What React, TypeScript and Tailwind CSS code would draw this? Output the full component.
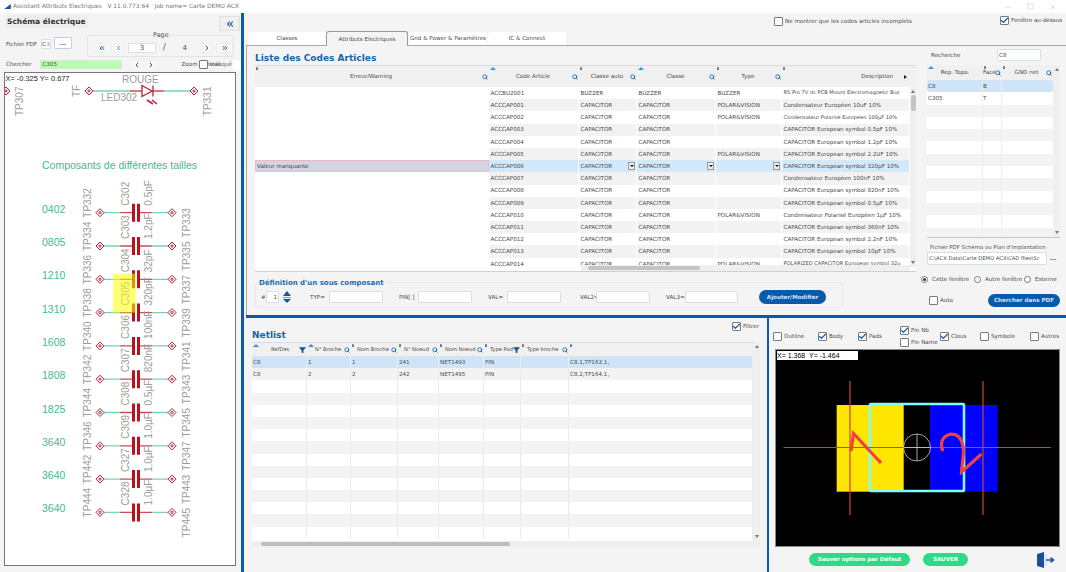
import React from "react";
import { Check, ChevronLeft, ChevronRight, ChevronsLeft, ChevronsRight, Filter, Minus, Search, Square, X } from "lucide-react";

const BLUE = "#0b5aa8";

type Row = [string, string, string, string, string];

const codes: Row[] = [
  ["ACCBU2001", "BUZZER", "BUZZER", "BUZZER", "RS Pro 7V dc PCB Mount Electromagnetic Buz"],
  ["ACCCAP001", "CAPACITOR", "CAPACITOR", "POLAR&VISION", "Condensateur  Européen  10uF 10%"],
  ["ACCCAP002", "CAPACITOR", "CAPACITOR", "POLAR&VISION", "Condensateur Polarisé  Européen  100µF 10%"],
  ["ACCCAP003", "CAPACITOR", "CAPACITOR", "", "CAPACITOR  European symbol  0.5pF 10%"],
  ["ACCCAP004", "CAPACITOR", "CAPACITOR", "", "CAPACITOR  European symbol  1.2pF 10%"],
  ["ACCCAP005", "CAPACITOR", "CAPACITOR", "POLAR&VISION", "CAPACITOR  European symbol  2.2UF 10%"],
  ["ACCCAP006", "CAPACITOR", "CAPACITOR", "", "CAPACITOR  European symbol  320pF 10%"],
  ["ACCCAP007", "CAPACITOR", "CAPACITOR", "", "Condensateur  Européen  100nF 10%"],
  ["ACCCAP008", "CAPACITOR", "CAPACITOR", "", "CAPACITOR European symbol 820nF 10%"],
  ["ACCCAP009", "CAPACITOR", "CAPACITOR", "", "CAPACITOR  European symbol  0.5µF 10%"],
  ["ACCCAP010", "CAPACITOR", "CAPACITOR", "POLAR&VISION", "Condensateur Polarisé Européen 1µF 10%"],
  ["ACCCAP011", "CAPACITOR", "CAPACITOR", "", "CAPACITOR  European symbol  360nF 10%"],
  ["ACCCAP012", "CAPACITOR", "CAPACITOR", "", "CAPACITOR  European symbol  2.2nF 10%"],
  ["ACCCAP013", "CAPACITOR", "CAPACITOR", "", "CAPACITOR  European symbol  10pF 10%"],
  ["ACCCAP014", "CAPACITOR", "CAPACITOR", "POLAR&VISION", "POLARIZED CAPACITOR  European symbol  32u"],
];

const caps = [
  ["0402", "TP332", "C302", "0.5pF", "TP333"],
  ["0805", "TP334", "C303", "1.2pF", "TP335"],
  ["1210", "TP336", "C304", "32pF", "TP337"],
  ["1310", "TP338", "C305", "320pF", "TP339"],
  ["1608", "TP340", "C306", "100nF", "TP341"],
  ["1808", "TP342", "C307", "820nF", "TP343"],
  ["1825", "TP344", "C308", "0.5µF", "TP345"],
  ["3640", "TP346", "C309", "1.0µF", "TP347"],
  ["3640", "TP442", "C327", "1.0µF", "TP443"],
  ["3640", "TP444", "C328", "1.0µF", "TP445"],
];

function Box({ checked = false }: { checked?: boolean }) {
  return (
    <span className="w-[9px] h-[9px] shrink-0 bg-white border border-[#7a7a7a] rounded-[1px] flex items-center justify-center">
      {checked && <Check size={9} strokeWidth={3.5} color="#1b5fa8" className="shrink-0" />}
    </span>
  );
}

function Tick({ label, checked, className = "" }: { label: string; checked?: boolean; className?: string }) {
  return (
    <span className={"flex items-center gap-[2px] " + className}>
      <Box checked={checked} />
      <span className="whitespace-nowrap">{label}</span>
    </span>
  );
}

function Radio({ label, on, className = "" }: { label: string; on?: boolean; className?: string }) {
  return (
    <span className={"flex items-center gap-[4px] " + className}>
      <span className="w-[7px] h-[7px] rounded-full bg-white border border-[#777] flex items-center justify-center">
        {on && <span className="w-[3px] h-[3px] rounded-full bg-[#333]" />}
      </span>
      <span className="whitespace-nowrap">{label}</span>
    </span>
  );
}

function Lens({ className = "" }: { className?: string }) {
  return <Search size={6} strokeWidth={3.5} color="#1b6ab5" className={"absolute top-1/2 -translate-y-1/2 " + className} />;
}

function Funnel({ className = "" }: { className?: string }) {
  return <Filter size={7} strokeWidth={2} color="#1b4f80" fill="#1b4f80" className={"absolute top-1/2 -translate-y-1/2 " + className} />;
}

function Sort({ className = "" }: { className?: string }) {
  return <span className={"absolute top-[1px] w-0 h-0 border-x-[3px] border-x-transparent border-b-[3px] border-b-[#2a9be0] " + className} />;
}

function Pin({ className = "" }: { className?: string }) {
  return <span className={"absolute top-[1px] w-[2px] h-[3px] bg-[#777] rounded-t-[1px] " + className} />;
}

function NavBtn({ children, className = "" }: { children: React.ReactNode; className?: string }) {
  return <span className={"h-[10px] bg-[#f7f7f7] border border-[#eeeeee] flex items-center justify-center text-[#1b6ab5] " + className}>{children}</span>;
}

function Input({ className = "", value = "" }: { className?: string; value?: string }) {
  return (
    <span className={"h-[12px] bg-white border border-[#d6e0ea] rounded-[1px] flex items-center px-[1px] whitespace-nowrap shrink-0 " + className}>
      {value}
    </span>
  );
}

function ScrollV({ className = "", thumb = "" }: { className?: string; thumb?: string }) {
  return (
    <div className={"w-[6px] bg-[#efefef] flex flex-col items-center shrink-0 " + className}>
      <span className="mt-[3px] w-0 h-0 border-x-[2px] border-x-transparent border-b-[3px] border-b-[#777]" />
      <span className={"w-[5px] bg-[#c4c4c4] rounded-[3px] " + thumb} />
      <span className="mt-auto mb-[3px] w-0 h-0 border-x-[2px] border-x-transparent border-t-[3px] border-t-[#777]" />
    </div>
  );
}

function Pad({ x, y }: { x: number; y: number }) {
  return (
    <g fill="#ffffff" stroke="#c01f2e" strokeWidth="1">
      <path d={`M${x - 4} ${y}L${x} ${y - 4}L${x + 4} ${y}L${x} ${y + 4}Z`} />
      <circle cx={x} cy={y} r="1.1" fill="#ffffff" />
    </g>
  );
}

function Schematic() {
  const grey = "#9c9c9c";
  return (
    <svg viewBox="5 73 230 492" className="w-[230px] h-[492px] block" fontFamily="'Liberation Sans', sans-serif">
      <text x="5.5" y="81" fontSize="7.4" fill="#222">X= -0.325  Y= 0.677</text>
      <text x="122" y="83" fontSize="10" fill={grey}>ROUGE</text>
      <text x="101" y="101" fontSize="10" fill={grey}>LED302</text>
      <text transform="translate(80 97) rotate(-90)" fontSize="10" fill={grey}>TF</text>
      <text transform="translate(23 116) rotate(-90)" fontSize="10" fill={grey}>TP307</text>
      <text transform="translate(211 116) rotate(-90)" fontSize="10" fill={grey}>TP331</text>
      <Pad x={6} y={91} />
      <Pad x={89} y={91} />
      <Pad x={194} y={91} />
      <path d="M93 91H130M164 91H190" stroke="#7fd0b5" strokeWidth="1.3" />
      <path d="M130 91H142M153 91H164" stroke="#c85050" strokeWidth="1.3" />
      <path d="M142 85.5V96.5L152 91ZM153 85.5V96.5" fill="none" stroke="#c01f2e" strokeWidth="1.3" />
      <path d="M147 100L153 104M152 100L157 104" stroke="#c01f2e" strokeWidth="1.6" />
      <text x="42" y="169" fontSize="10.5" fill="#45b98f">Composants de différentes tailles</text>
      {caps.map((c, i) => {
        const y = 212.7 + i * 33.3;
        return (
          <g key={i}>
            <text x="42" y={y} fontSize="10.5" fill="#45b98f">{c[0]}</text>
            <text transform={`translate(91 ${y + 5}) rotate(-90)`} fontSize="10" fill={grey}>{c[1]}</text>
            <text transform={`translate(129 ${y - 7}) rotate(-90)`} fontSize="10" fill={grey}>{c[2]}</text>
            <text transform={`translate(152 ${y - 7}) rotate(-90)`} fontSize="10" fill={grey}>{c[3]}</text>
            <text transform={`translate(190 ${y + 25}) rotate(-90)`} fontSize="10" fill={grey}>{c[4]}</text>
            <path d={`M103 ${y}H120M152 ${y}H169`} stroke="#7fd0b5" strokeWidth="1.3" />
            <path d={`M120 ${y}H133M139 ${y}H152`} stroke="#c85050" strokeWidth="1.3" />
            <path d={`M132 ${y - 9}h3v18h-3zM137 ${y - 9}h3v18h-3z`} fill="#b8121f" />
            <Pad x={100} y={y} />
            <Pad x={172} y={y} />
          </g>
        );
      })}
      <rect x="113" y="273.6" width="22.6" height="39" fill="#ffff00" opacity="0.55" />
    </svg>
  );
}

function LeftPanel() {
  return (
    <aside className="w-[241px] shrink-0 flex flex-col">
      <div className="h-[22px] flex items-start pl-[5px] pr-[1px] pt-[2px]">
        <span className="w-[83px] h-[13px] bg-[#eeeeee] rounded-[3px] flex items-center pl-[2px] font-bold text-[7.5px] text-[#333]">Schéma électrique</span>
        <span className="ml-auto mt-[1px] w-[21px] h-[15px] bg-[#f0f0f0] border border-[#e0e0e0] flex items-center justify-center text-[#1b6ab5]">
          <ChevronsLeft size={10} strokeWidth={3} />
        </span>
      </div>
      <div className="h-[23px] flex pl-[6px]">
        <span className="w-[35px] mt-[5px] whitespace-nowrap">Fichier PDF</span>
        <span className="w-[10px] h-[10px] mt-[4px] bg-white border border-[#d6e0ea] flex items-center">C:\</span>
        <span className="w-[18px] h-[12px] mt-[2px] ml-[3px] bg-white border border-[#bfd0e0] rounded-[1px] flex items-center justify-center font-bold">...</span>
        <div className="relative w-[147px] h-[22px] ml-[15px] border border-[#e4e4e4] rounded-[2px] flex items-end pb-[3px] pl-[6px]">
          <span className="absolute left-[64px] -top-[5px] text-[6.5px] bg-[#f4f4f4] px-[1px]">Page</span>
          <NavBtn className="w-[17px]"><ChevronsLeft size={8} strokeWidth={3} /></NavBtn>
          <NavBtn className="w-[9px] ml-[3px]"><ChevronLeft size={8} strokeWidth={3} /></NavBtn>
          <span className="w-[28px] h-[10px] ml-[5px] bg-white border border-[#d6e0ea] flex items-center justify-center text-[7px]">3</span>
          <span className="ml-[7px] text-[8px] leading-[10px]">/</span>
          <span className="ml-[17px] text-[7px] leading-[10px]">4</span>
          <NavBtn className="w-[10px] ml-[15px]"><ChevronRight size={8} strokeWidth={3} /></NavBtn>
          <NavBtn className="w-[17px] ml-[4px]"><ChevronsRight size={8} strokeWidth={3} /></NavBtn>
        </div>
      </div>
      <div className="h-[14px] flex items-start pl-[6px] pt-[2px]">
        <span className="w-[35px] leading-[9px]">Chercher</span>
        <span className="w-[83px] h-[9px] bg-[#b8fdb0] border border-[#d8e8d8] flex items-center pl-[1px]">C305</span>
        <NavBtn className="w-[11px] ml-[10px] border-0"><ChevronLeft size={8} strokeWidth={3} /></NavBtn>
        <NavBtn className="w-[11px] ml-[3px] border-0"><ChevronRight size={8} strokeWidth={3} /></NavBtn>
        <span className="ml-[25px] leading-[9px]">Zoom</span>
        <span className="ml-[1px]"><Box /></span>
        <span className="relative w-[25px] h-[9px] leading-[9px] text-[#666]">
          Isolé
          <span className="absolute left-[2px] top-0">masqué</span>
        </span>
        <span className="w-[8px] h-[10px] bg-white ml-[1px]" />
      </div>
      <div className="ml-[4px] w-[232px] h-[494px] bg-white border border-[#777]">
        <Schematic />
      </div>
    </aside>
  );
}

function CodesTable() {
  const cols = "grid grid-cols-[234px_90px_58px_79px_66px_128px]";
  return (
    <div className="w-[661px] h-[207px] flex flex-col bg-white border-b border-[#cfcfcf] overflow-hidden">
      <div className={cols + " h-[22px] shrink-0 bg-[#f0f0f0] border-t border-[#dddddd]"}>
        {["Erreur/Warning", "Code Article", "Classe auto", "Classe", "Type"].map((h, i) => (
          <div key={h} className="relative flex items-center justify-center pr-[2px]">
            {h}
            {i === 1 || i === 3 ? <Sort className="left-[1px]" /> : <Pin className="left-[1px]" />}
            <Lens className="right-[1px]" />
          </div>
        ))}
        <div className="relative flex items-center justify-end pr-[17px]">
          Description
          <Pin className="left-[1px]" />
          <span className="absolute right-[3px] top-1/2 -translate-y-1/2 w-0 h-0 border-y-[2px] border-y-transparent border-l-[3px] border-l-[#222]" />
        </div>
      </div>
      <div className="flex flex-1 min-h-0 relative">
        <div className="flex-1 min-w-0 overflow-hidden">
          {codes.map((r, i) => {
            const sel = i === 6;
            const stripe = sel ? "bg-[#d3e8f8]" : i % 2 ? "bg-[#f2f2f2]" : "bg-white";
            return (
              <div key={r[0]} className={cols + " h-[12.2px] items-stretch"}>
                <div className={sel ? "bg-[#d2d3e3] border border-[#eeb8c4] pl-[1px] flex items-center" : "bg-white"}>
                  {sel ? "Valeur manquante" : ""}
                </div>
                {r.map((v, j) => (
                  <div key={j} className={"relative flex items-center pl-[1.5px] whitespace-nowrap border-r border-white " + stripe + (v.length > 40 ? " text-[5.1px]" : "")}>
                    {v}
                    {sel && j > 0 && j < 4 && (
                      <span className="absolute right-[1px] top-[2px] w-[7px] h-[8px] bg-[#efefef] border border-[#999] flex items-center justify-center">
                        <span className="w-0 h-0 border-x-[2px] border-x-transparent border-t-[2px] border-t-[#111]" />
                      </span>
                    )}
                  </div>
                ))}
              </div>
            );
          })}
        </div>
        <ScrollV className="h-[180px]" thumb="mt-[2px] h-[16px]" />
        <div className="absolute left-[326px] right-[6px] bottom-[0px] h-[6px] bg-[#efefef] flex items-center">
          <span className="ml-[7px] w-[112px] h-[4px] bg-[#c4c4c4] rounded-[2px]" />
        </div>
      </div>
    </div>
  );
}

function Definition() {
  return (
    <div className="mt-[10px] w-[588px] h-[26px] relative border border-[#eaeaea] rounded-[3px] flex items-center pl-[5px] pt-[4px]">
      <span className="absolute left-[3px] -top-[5px] bg-[#f4f4f4] pr-[2px] font-bold text-[7px] text-[#1b6ab5]">Définition d'un sous composant</span>
      <span className="w-[5px]">#</span>
      <Input className="w-[13px] justify-end" value="1" />
      <span className="w-[10px] h-[13px] ml-[3px] flex flex-col items-center">
        <span className="w-0 h-0 border-x-[4px] border-x-transparent border-b-[5px] border-b-[#0b5aa8]" />
        <span className="w-[8px] h-[1px] bg-[#999] mt-[1px]" />
        <span className="w-0 h-0 mt-[1px] border-x-[4px] border-x-transparent border-t-[4px] border-t-[#0b5aa8]" />
      </span>
      <span className="ml-[18px] w-[19px]">TYP=</span>
      <Input className="w-[54px]" />
      <span className="ml-[16px] w-[19px]">PIN[ ]</span>
      <Input className="w-[54px]" />
      <span className="ml-[16px] w-[19px]">VAL=</span>
      <Input className="w-[54px]" />
      <span className="ml-[19px] w-[16px]">VAL2=</span>
      <Input className="w-[54px]" />
      <span className="ml-[16px] w-[19px]">VAL3=</span>
      <Input className="w-[53px]" />
      <span className="ml-[21px] w-[67px] h-[14px] bg-[#0b5aa8] rounded-full text-[#cfe4f8] font-bold flex items-center justify-center">Ajouter/Modifier</span>
    </div>
  );
}

function SidePanel() {
  const cols = "grid grid-cols-[56px_19px_51px]";
  const rows = Array.from({ length: 13 }, (_, i) => i);
  return (
    <div className="flex-1 min-w-0 flex flex-col pl-[8px] pr-[6px]">
      <div className="h-[19px] flex items-start pt-[3px] pl-[4px]">
        <span className="w-[66px] mt-[2px]">Recherche</span>
        <Input className="w-[44px] pl-[1px]" value="C8" />
      </div>
      <div className="w-[133px] h-[173px] flex bg-white border-b border-[#c8c8c8] overflow-hidden">
        <div className="w-[126px]">
          <div className={cols + " h-[15px] bg-[#f0f0f0]"}>
            <div className="relative flex items-center justify-center"><Sort className="left-[1px]" />Rep. Topo.</div>
            <div className="relative flex items-center"><Pin className="left-[1px]" />Face<Lens className="right-[1px]" /></div>
            <div className="relative flex items-center justify-center pr-[2px]"><Pin className="left-[1px]" />GND net<Lens className="right-[1px]" /></div>
          </div>
          {rows.map((i) => (
            <div key={i} className={cols + " h-[12.3px] " + (i === 0 ? "bg-[#cfe5f7] rounded-[2px]" : i % 2 ? "bg-white" : "bg-[#f3f3f3]")}>
              <div className="pl-[1px] flex items-center border-r border-[#eeeeee]">{i === 0 ? "C8" : i === 1 ? "C305" : ""}</div>
              <div className="flex items-center border-r border-[#eeeeee]">{i === 0 ? "B" : i === 1 ? "T" : ""}</div>
              <div />
            </div>
          ))}
        </div>
        <ScrollV className="w-[7px]" thumb="hidden" />
      </div>
      <span className="mt-[5px] pl-[3px] text-[5.4px] text-[#555] whitespace-nowrap leading-[9px]">Fichier PDF Schéma ou Plan d'implantation</span>
      <div className="flex items-center">
        <Input className="w-[120px] h-[13px] border-[#a9c6e4] text-[5.2px]" value="C:\ACX Data\Carte DEMO ACX\CAD files\Sc" />
        <span className="ml-[3px] font-bold leading-none">...</span>
      </div>
      <div className="mt-[10px] -ml-[6px] flex items-center h-[8px]">
        <Radio label="Cette fenêtre" on className="w-[53px]" />
        <Radio label="Autre fenêtre" className="w-[50px]" />
        <Radio label="Externe" />
      </div>
      <div className="mt-[10px] flex items-center h-[14px] pl-[2px]">
        <Tick label="Auto" />
        <span className="ml-[35px] w-[72px] h-[13px] rounded-full bg-[#0b5aa8] text-[#cfe4f8] font-bold flex items-center justify-center whitespace-nowrap">Chercher dans PDF</span>
      </div>
    </div>
  );
}

function Tabs() {
  const base = "h-[13px] flex items-center justify-center bg-white rounded-t-[3px] whitespace-nowrap";
  return (
    <div className="flex items-end">
      <span className={base + " w-[78px] ml-[4px]"}>Classes</span>
      <span className="w-[82px] h-[15px] -mb-[1px] flex items-center justify-center bg-[#f4f4f4] border-x border-t border-[#999] rounded-t-[3px] z-10 whitespace-nowrap">Attributs Electriques</span>
      <span className={base + " w-[78px] ml-[1px]"}>Gnd &amp; Power &amp; Paramètres</span>
      <span className={base + " w-[78px] ml-[1px]"}>IC &amp; Connect</span>
    </div>
  );
}

function TopSection() {
  return (
    <section className="h-[302px] shrink-0 flex flex-col">
      <div className="h-[32px] shrink-0 flex items-end relative">
        <Tabs />
        <Tick label="Ne montrer que les codes articles incomplets" checked={false} className="absolute left-[530px] top-[4px]" />
        <Tick label="Fenêtre au-dessus" checked className="absolute left-[756px] top-[3px]" />
      </div>
      <div className="flex-1 min-h-0 flex ml-[2px] border-t border-l border-[#a8a8a8]">
        <div className="w-[672px] shrink-0 pl-[8px] flex flex-col">
          <h2 className="h-[19px] flex items-center pt-[6px] text-[9px] font-bold text-[#1565a8]">Liste des Codes Articles</h2>
          <CodesTable />
          <Definition />
        </div>
        <SidePanel />
      </div>
    </section>
  );
}

function Netlist() {
  const cols = "grid grid-cols-[55px_44px_47px_41px_45px_37px_48px_184px]";
  const heads = ["RefDes", "N° Broche", "Nom Broche", "N° Noeud", "Nom Noeud", "Type Pad", "Type broche"];
  const data = [
    ["C8", "1", "1", "241", "NET1493", "PIN", "", "C8.1,TP163.1,"],
    ["C8", "2", "2", "242", "NET1495", "PIN", "", "C8.2,TP164.1,"],
    ...Array.from({ length: 13 }, () => ["", "", "", "", "", "", "", ""]),
  ];
  return (
    <div className="w-[523px] shrink-0 flex flex-col pl-[8px] pr-[5px] relative">
      <Tick label="Filtrer" checked className="absolute right-[8px] top-[4px]" />
      <h2 className="h-[24px] flex items-end text-[9px] font-bold text-[#1565a8]">Netlist</h2>
      <div className="w-[508px] h-[205px] flex flex-col bg-white overflow-hidden">
        <div className="flex-1 min-h-0 flex overflow-hidden">
          <div className="w-[501px] overflow-hidden">
            <div className={cols + " h-[14px] bg-[#f0f0f0] border-t border-[#dddddd]"}>
              {heads.map((h, i) => (
                <div key={h} className={"relative flex items-center whitespace-nowrap text-[5.2px] " + (i === 0 ? "pl-[19px]" : i === 1 ? "pl-[8px]" : "pl-[6px]")}>
                  {h}
                  {i < 2 ? <Sort className="left-[1px]" /> : <Pin className="left-[1px]" />}
                  {i === 0 || i === 5 ? <Funnel className="right-[1px]" /> : <Lens className="right-[1px]" />}
                </div>
              ))}
              <div className="relative"><Pin className="left-[1px]" /></div>
            </div>
            {data.map((r, i) => (
              <div key={i} className={cols + " h-[12.2px] " + (i === 0 ? "bg-[#cfe5f7]" : i % 2 ? "bg-[#f3f3f3]" : "bg-white")}>
                {r.map((v, j) => (
                  <div key={j} className="pl-[1px] flex items-center border-r border-[#ececec] whitespace-nowrap">{v}</div>
                ))}
              </div>
            ))}
          </div>
          <ScrollV className="w-[7px]" thumb="hidden" />
        </div>
        <div className="h-[6px] shrink-0 bg-[#efefef] flex items-center">
          <span className="ml-[9px] w-[249px] h-[4px] bg-[#bdbdbd] rounded-[2px]" />
        </div>
      </div>
    </div>
  );
}

function Footprint() {
  return (
    <div className="relative ml-[6px] w-[285px] h-[198px] bg-black border border-[#888]">
      <span className="absolute left-[1px] top-[1px] w-[81px] h-[9px] bg-white text-black text-[7px] leading-[9px] font-['Liberation_Sans',sans-serif] whitespace-pre">X= 1.368  Y= -1.464</span>
      <svg viewBox="776 350 283 196" className="w-[283px] h-[196px] block">
        <rect x="836.7" y="405" width="67" height="86.7" fill="#ffe600" />
        <rect x="930" y="405" width="67.7" height="86.7" fill="#0000ff" />
        <rect x="870" y="404" width="94" height="87" fill="none" stroke="#7ffcff" strokeWidth="2.6" rx="1" />
        <path d="M783.5 447.5H1051M850 381V515M983 381V515" stroke="#d04040" strokeWidth="1.2" />
        <circle cx="917" cy="447.5" r="13.5" fill="none" stroke="#cccccc" strokeWidth="0.8" />
        <path d="M904 447.5H930M917 434V461" stroke="#cccccc" strokeWidth="0.8" />
        <path d="M851 451L853.5 433.5L881 463" fill="none" stroke="#f04040" strokeWidth="3.2" />
        <path d="M943 451C936 436 955 428 961 440C966 450 962 460 961.5 472L981.5 454" fill="none" stroke="#f04040" strokeWidth="3.2" />
      </svg>
    </div>
  );
}

function FootprintPanel() {
  return (
    <div className="flex-1 min-w-0 flex flex-col">
      <div className="h-[31px] flex items-end pb-[8px] pl-[4px] relative">
        <Tick label="Outline" className="w-[45px]" />
        <Tick label="Body" checked className="w-[40px]" />
        <Tick label="Pads" checked className="w-[42px]" />
        <span className="flex flex-col gap-[3px] w-[40px] -mb-[6px]">
          <Tick label="Pin Nb" checked />
          <Tick label="Pin Name" />
        </span>
        <Tick label="Clous" checked className="w-[40px]" />
        <Tick label="Symbole" className="w-[50px]" />
        <Tick label="Autres" />
      </div>
      <Footprint />
      <div className="flex-1 flex items-center pl-[40px]">
        <span className="w-[101px] h-[13px] rounded-full bg-[#2bdc84] text-white font-bold flex items-center justify-center whitespace-nowrap">Sauver options par Défaut</span>
        <span className="ml-[13px] w-[45px] h-[13px] rounded-full bg-[#2bdc84] text-white font-bold flex items-center justify-center">SAUVER</span>
        <svg viewBox="0 0 18 16" className="ml-[69px] w-[18px] h-[16px]">
          <path d="M0 2L7 0V16L0 14Z" fill="#1b4f9c" />
          <path d="M7 2H10V14H7Z" fill="#d8e8fa" />
          <path d="M9 8H16M13.5 5.5L16.5 8L13.5 10.5" fill="none" stroke="#1b4f9c" strokeWidth="1.6" />
        </svg>
      </div>
    </div>
  );
}

export default function App() {
  return (
    <div className="w-[1066px] h-[572px] overflow-hidden flex flex-col bg-[#f4f4f4] text-[5.6px] text-[#4a4a4a] font-['DejaVu_Sans',sans-serif]">
      <header className="h-[13px] shrink-0 bg-white flex items-center pl-[4px] text-[#777] text-[5.9px]">
        <svg viewBox="0 0 8 6" className="w-[7px] h-[5px] mr-[2px]"><path d="M0 6L8 0V6Z" fill={BLUE} /></svg>
        <span className="whitespace-pre">Assistant Attributs Electriques   V 11.0.773.64   Job name= Carte DEMO ACX</span>
        <span className="ml-auto flex items-center gap-[15px] pr-[9px] text-[#999]">
          <Minus size={8} strokeWidth={1} />
          <Square size={7} strokeWidth={1} />
          <X size={8} strokeWidth={1} />
        </span>
      </header>
      <div className="flex-1 min-h-0 flex">
        <LeftPanel />
        <div className="w-[3px] shrink-0 bg-[#0b5aa8]" />
        <main className="flex-1 min-w-0 flex flex-col">
          <TopSection />
          <div className="h-[3px] ml-[2px] shrink-0 bg-[#0b5aa8]" />
          <div className="flex-1 min-h-0 flex">
            <Netlist />
            <div className="w-[2px] shrink-0 bg-[#0b5aa8]" />
            <FootprintPanel />
          </div>
        </main>
      </div>
    </div>
  );
}
